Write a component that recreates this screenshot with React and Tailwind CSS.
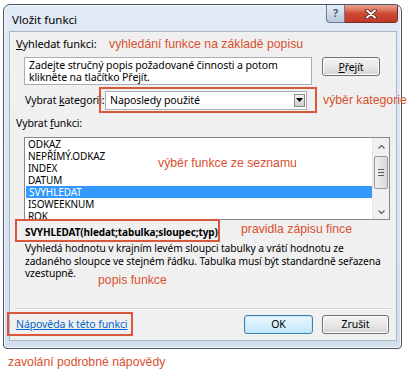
import React from 'react'

const ui = { fontFamily: '"Noto Sans", "Open Sans", sans-serif' }
const note = { fontFamily: '"Liberation Sans", Arial, sans-serif' }

function WinButton({ children, primary, className = '' }) {
  return (
    <div
      className={
        'flex items-center justify-center h-[19px] rounded-[3px] border text-[10.5px] text-black ' +
        (primary
          ? 'border-[#3c7fb1] bg-gradient-to-b from-[#eaf6fd] via-[#d9f0fc] to-[#bee6fd] shadow-[inset_0_0_0_1px_#c4e5f6]'
          : 'border-[#707070] bg-gradient-to-b from-[#f4f4f4] via-[#e8e8e8] to-[#d3d3d3] shadow-[inset_0_0_0_1px_#fcfcfc]') +
        ' ' +
        className
      }
    >
      {children}
    </div>
  )
}

function Note({ children, className }) {
  return (
    <div style={note} className={'absolute text-[12.25px] leading-[14px] text-[#d9502e] whitespace-nowrap ' + className}>
      {children}
    </div>
  )
}

function Scrollbar() {
  return (
    <div className="flex flex-col w-[17px] h-full bg-[#f0f0f0] border-l border-[#e6e6e6]">
      <div className="flex items-center justify-center h-[17px]">
        <svg width="7" height="4" viewBox="0 0 7 4">
          <path d="M0.5 3.5 L3.5 0.5 L6.5 3.5" fill="none" stroke="#606060" strokeWidth="1.2" />
        </svg>
      </div>
      <div className="mx-[1px] mt-[1px] h-[33px] rounded-[2px] border border-[#979797] bg-gradient-to-r from-[#f1f1f1] to-[#d8d8d8] flex flex-col items-center justify-center gap-[2px]">
        <div className="w-[6px] h-px bg-[#5b5b5b]" />
        <div className="w-[6px] h-px bg-[#5b5b5b]" />
        <div className="w-[6px] h-px bg-[#5b5b5b]" />
      </div>
      <div className="flex-1" />
      <div className="flex items-center justify-center h-[15px]">
        <svg width="7" height="4" viewBox="0 0 7 4">
          <path d="M0.5 0.5 L3.5 3.5 L6.5 0.5" fill="none" stroke="#606060" strokeWidth="1.2" />
        </svg>
      </div>
    </div>
  )
}

export default function App() {
  const items = ['ODKAZ', 'NEPŘÍMÝ.ODKAZ', 'INDEX', 'DATUM', 'SVYHLEDAT', 'ISOWEEKNUM', 'ROK']

  return (
    <div className="relative w-[408px] h-[371px] bg-white overflow-hidden" style={ui}>
      {/* window */}
      <div className="ml-[3px] mt-[4px] w-[399px] h-[345px] rounded-t-[7px] rounded-b-[4px] border border-[#4a5568] bg-gradient-to-b from-[#e1eaf5] to-[#d3dfed] shadow-[inset_0_0_0_1px_#f4f8fc] flex flex-col">
        {/* title bar */}
        <div className="flex justify-between h-[26px]">
          <div className="pl-[8px] pt-[7px] text-[11.5px] leading-[15px] text-black">Vložit funkci</div>
          <div className="flex h-[18px] mr-[3px]">
            <div className="w-[19px] rounded-bl-[4px] border border-[#6b7a90] border-t-0 bg-gradient-to-b from-[#e6edf6] via-[#cfdbe9] to-[#b7c7db] flex items-center justify-center text-[11px] font-bold text-[#4a5a70]">
              ?
            </div>
            <div className="w-[53px] rounded-br-[4px] border border-[#6f2f24] border-t-0 border-l-0 bg-gradient-to-b from-[#e8a593] via-[#cf4a31] to-[#c0372a] flex items-center justify-center">
              <svg width="12" height="10" viewBox="0 0 12 10">
                <path d="M2 1.5 L10 8.5 M10 1.5 L2 8.5" stroke="#4b1a12" strokeWidth="3.6" strokeLinecap="round" />
                <path d="M2 1.5 L10 8.5 M10 1.5 L2 8.5" stroke="#ffffff" strokeWidth="2" strokeLinecap="round" />
              </svg>
            </div>
          </div>
        </div>

        {/* client panel */}
        <div className="ml-[5px] w-[388px] h-[310px] border border-[#a7b6ca] bg-[#f0f0f0] flex flex-col text-[10px] tracking-[-0.1px] leading-[12px] text-black">
          <div className="h-[24px] flex items-center pl-[6px] text-[11px]">
            <span>
              <span className="underline">V</span>yhledat funkci:
            </span>
          </div>

          <div className="flex items-start pl-[14px] mt-[1px]">
            <div className="w-[288px] h-[28px] border border-[#abadb3] bg-white px-[4px] pt-[2px] leading-[11.5px] text-[10.5px]">
              Zadejte stručný popis požadované činnosti a potom
              <br />
              klikněte na tlačítko Přejít.
            </div>
            <WinButton className="ml-[10px] w-[58px]">
              <span>
                <span className="underline">P</span>řejít
              </span>
            </WinButton>
          </div>

          <div className="flex items-center h-[26px] mt-[2px] pl-[15px] text-[10.5px]">
            <span className="w-[80px] whitespace-nowrap">
              Vybrat <span className="underline">k</span>ategorii:
            </span>
            <div className="w-[202px] h-[19px] border border-[#abadb3] bg-white flex items-center justify-between pl-[4px] pr-[1px]">
              <span>Naposledy použité</span>
              <div className="w-[11px] h-[13px] border border-[#8c8c8c] bg-gradient-to-b from-[#f2f2f2] to-[#cfcfcf] flex items-center justify-center">
                <svg width="7" height="4" viewBox="0 0 7 4">
                  <path d="M0 0 H7 L3.5 4 Z" fill="#000" />
                </svg>
              </div>
            </div>
          </div>

          <div className="h-[20px] flex items-center pl-[6px] text-[10.5px]">
            <span>
              Vybrat <span className="underline">f</span>unkci:
            </span>
          </div>

          <div className="ml-[14px] mt-[4px] w-[366px] h-[83px] border border-[#828790] bg-white flex overflow-hidden">
            <div className="flex-1 flex flex-col">
              {items.map((it, i) => (
                <div
                  key={it}
                  className={
                    'h-[12px] shrink-0 flex items-center pl-[3px] ' +
                    (i === 4 ? 'bg-[#3399ff] text-white ml-px' : '')
                  }
                >
                  {it}
                </div>
              ))}
            </div>
            <Scrollbar />
          </div>

          <div className="h-[20px] mt-[2px] flex items-center pl-[15px] font-bold">
            SVYHLEDAT(hledat;tabulka;sloupec;typ)
          </div>
          <div className="pl-[15px] pr-[4px] leading-[12.5px] text-[10.25px] whitespace-nowrap">
            Vyhledá hodnotu v krajním levém sloupci tabulky a vrátí hodnotu ze
            <br />
            zadaného sloupce ve stejném řádku. Tabulka musí být standardně seřazena
            <br />
            vzestupně.
          </div>

          <div className="flex-1" />
          <div className="mx-[5px] border-t border-[#d5d5d5] border-b border-b-white" />

          <div className="flex items-center h-[30px] pb-[2px] pl-[6px] pr-[7px]">
            <span className="text-[#0066cc] underline text-[10.5px]">Nápověda k této funkci</span>
            <div className="flex-1" />
            <WinButton primary className="w-[69px]">OK</WinButton>
            <WinButton className="ml-[9px] w-[67px]">Zrušit</WinButton>
          </div>
        </div>
      </div>

      {/* annotations */}
      <Note className="left-[109px] top-[37px]">vyhledání funkce na základě popisu</Note>
      <div className="absolute left-[99px] top-[87px] w-[218px] h-[26px] border-2 border-[#d9573a]" />
      <Note className="left-[323px] top-[93px]">výběr kategorie</Note>
      <Note className="left-[158px] top-[156px]">výběr funkce ze seznamu</Note>
      <div className="absolute left-[15px] top-[219px] w-[205px] h-[23px] border-2 border-[#d9573a]" />
      <Note className="left-[241px] top-[222px]">pravidla zápisu fince</Note>
      <Note className="left-[98px] top-[273px]">popis funkce</Note>
      <div className="absolute left-[7px] top-[312px] w-[126px] h-[24px] border-2 border-[#d9573a]" />
      <Note className="left-[8px] top-[355px]">zavolání podrobné nápovědy</Note>
    </div>
  )
}
